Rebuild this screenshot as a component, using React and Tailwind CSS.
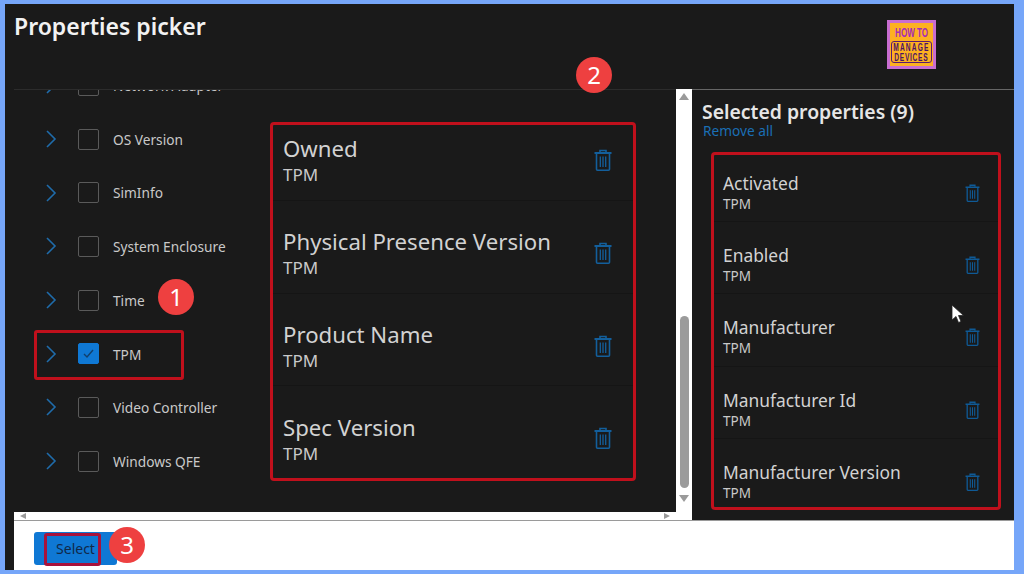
const FONT = "font-['Noto_Sans','Open_Sans',sans-serif]";

function Chevron() {
  return (
    <svg width="12" height="20" viewBox="0 0 12 20" fill="none" className="shrink-0">
      <polyline points="2,2 10,10 2,18" stroke="#1f6cab" strokeWidth="1.6" />
    </svg>
  );
}

function Trash({ className }) {
  return (
    <svg viewBox="0 0 18 22" fill="none" stroke="currentColor" strokeWidth="1.6" className={className}>
      <path d="M6 3.5V1.5h6v2" />
      <path d="M0.5 4h17" strokeWidth="2" />
      <path d="M2.5 4.5v15.7a1 1 0 0 0 1 1h11a1 1 0 0 0 1-1V4.5" />
      <path d="M6.3 7.5v10.5M9 7.5v10.5M11.7 7.5v10.5" strokeWidth="1.3" />
    </svg>
  );
}

function Badge({ n, className }) {
  return (
    <div className={`absolute flex h-[36px] w-[36px] items-center justify-center rounded-full bg-[#ee4040] text-[24px] leading-none text-white ${className}`}>
      {n}
    </div>
  );
}

function TreeRow({ label, checked, boxed }) {
  return (
    <div className="relative flex h-[53.7px] items-center pl-[31px]">
      <Chevron />
      <div
        className={`ml-[21px] flex h-[21px] w-[21px] shrink-0 items-center justify-center rounded-[2px] border ${
          checked ? "border-[#0f78d4] bg-[#0f78d4]" : "border-[#5a5a5a]"
        }`}
      >
        {checked && (
          <svg width="13" height="11" viewBox="0 0 13 11" fill="none">
            <polyline points="2,6 5,9 11,2" stroke="#123f6b" strokeWidth="1.4" />
          </svg>
        )}
      </div>
      <span className="ml-[14px] whitespace-nowrap pt-[2px] text-[13.7px] text-[#c9c9c9]">{label}</span>
      {boxed && (
        <div className="absolute left-[20px] top-[3px] h-[50px] w-[150px] rounded-[3px] border-[3px] border-[#c0101c]" />
      )}
    </div>
  );
}

const leftItems = ["Owned", "Physical Presence Version", "Product Name", "Spec Version"];
const rightItems = ["Activated", "Enabled", "Manufacturer", "Manufacturer Id", "Manufacturer Version"];

export default function App() {
  return (
    <div className={`relative h-[574px] w-[1024px] overflow-hidden bg-[#76a6f9] pb-[4px] pl-[5px] pr-[10px] pt-[4px] ${FONT}`}>
      <div className="flex h-full flex-col bg-[#1a1a1a] pl-[9px]">
        {/* header */}
        <div className="relative h-[85px] shrink-0">
          <h1 className="mt-[6px] text-[23px] font-semibold leading-[32px] text-[#f2f2f2]">Properties picker</h1>
          <div className="absolute left-[873px] top-[16px] flex h-[49px] w-[49px] flex-col items-center overflow-hidden border-[3px] border-[#c86dd0] bg-[#fdb021] pt-[2px] font-['Liberation_Sans',sans-serif] text-[#a52cb8]">
            <div className="scale-x-[0.62] whitespace-nowrap text-[13px] font-bold leading-[15px]">HOW TO</div>
            <div className="mt-[1px] flex h-[22px] w-[41px] flex-col items-center justify-center overflow-hidden rounded-[3px] border border-[#5a1a70] text-[#4b1466]">
              <div className="scale-x-[0.6] whitespace-nowrap text-[11px] font-bold leading-[10px] tracking-[2px]">MANAGE</div>
              <div className="scale-x-[0.6] whitespace-nowrap text-[11px] font-bold leading-[10px] tracking-[1.2px]">DEVICES</div>
            </div>
          </div>
        </div>

        {/* body */}
        <div className="flex h-[431px] shrink-0">
          <div className="flex w-[678px] shrink-0">
            <div className="flex h-[423px] flex-1 overflow-hidden border-t border-[#2c2c2c] bg-[#1a1a1a]">
              <div className="w-[256px] shrink-0 overflow-hidden">
                <div className="-mt-[31.5px]">
                  <TreeRow label="Network Adapter" />
                  <TreeRow label="OS Version" />
                  <TreeRow label="SimInfo" />
                  <TreeRow label="System Enclosure" />
                  <TreeRow label="Time" />
                  <TreeRow label="TPM" checked boxed />
                  <TreeRow label="Video Controller" />
                  <TreeRow label="Windows QFE" />
                </div>
              </div>
              <div className="mt-[32px] h-[359px] w-[366px] shrink-0 overflow-hidden rounded-[4px] border-[3px] border-[#c0101c]">
                {leftItems.map((t, i) => (
                  <div
                    key={t}
                    className={`flex items-start justify-between pl-[10px] pr-[21px] ${
                      i === 0 ? "h-[76px] pt-[10px]" : i === 3 ? "h-[92.7px] pt-[28px]" : "h-[92.7px] pt-[27px]"
                    } ${i < 3 ? "border-b border-[#151515]" : ""}`}
                  >
                    <div>
                      <div className="text-[22.2px] leading-[28px] text-[#d2d2d2]">{t}</div>
                      <div className="text-[17px] leading-[24px] text-[#c9c9c9]">TPM</div>
                    </div>
                    <Trash className={`${i === 3 ? "mt-[13px]" : "mt-[14px]"} h-[22px] w-[18px] text-[#135f9c]`} />
                  </div>
                ))}
              </div>
            </div>
            {/* vertical scrollbar */}
            <div className="flex h-[431px] w-[16px] shrink-0 flex-col items-center bg-white pt-[4px]">
              <div className="h-0 w-0 border-x-[5px] border-b-[7px] border-x-transparent border-b-[#9a9a9a]" />
              <div className="mt-[216px] h-[172px] w-[9px] rounded-full bg-[#9b9b9b]" />
              <div className="mt-[7px] h-0 w-0 border-x-[5px] border-t-[7px] border-x-transparent border-t-[#9a9a9a]" />
            </div>
          </div>
          {/* selected */}
          <div className="flex-1 border-t border-[#666] pl-[10px] pt-[9px]">
            <div className="whitespace-nowrap text-[19.4px] font-semibold leading-[25px] text-[#e6e6e6]">Selected properties (9)</div>
            <div className="ml-[1px] text-[13.7px] leading-[14px] text-[#1a6fb5]">Remove all</div>
            <div className="ml-[9px] mt-[14px] h-[358px] w-[290px] overflow-hidden rounded-[4px] border-[3px] border-[#c0101c]">
              {rightItems.map((t, i) => (
                <div
                  key={t}
                  className={`flex items-start justify-between pl-[9px] pr-[18px] ${
                    i === 0 ? "h-[67px] pt-[16.5px]" : "h-[72.4px] pt-[22px]"
                  } ${i < 4 ? "border-b border-[#151515]" : ""}`}
                >
                  <div>
                    <div className="whitespace-nowrap text-[17.4px] leading-[23px] text-[#d2d2d2]">{t}</div>
                    <div className="text-[13.5px] leading-[19px] text-[#c9c9c9]">TPM</div>
                  </div>
                  <Trash className="mt-[12px] h-[18px] w-[15px] text-[#0f5a96]" />
                </div>
              ))}
            </div>
          </div>
        </div>

        {/* footer */}
        <div className="relative flex-1 border-t border-[#9a9a9a] bg-white">
          <div className="absolute left-[20px] top-[11px] flex h-[33px] w-[83px] items-center justify-center rounded-[3px] bg-[#0f78d4] text-[14px] text-[#10294a]">
            Select
          </div>
        </div>
      </div>

      {/* horizontal scrollbar strip */}
      <div className="absolute left-[14px] top-[512px] flex h-[8px] w-[662px] items-center justify-between bg-white px-[6px]">
        <div className="h-0 w-0 border-y-[3px] border-r-[6px] border-y-transparent border-r-[#9a9a9a]" />
        <div className="h-0 w-0 border-y-[3px] border-l-[6px] border-y-transparent border-l-[#9a9a9a]" />
      </div>

      {/* annotations */}
      <div className="absolute left-[44px] top-[533px] h-[33px] w-[57px] rounded-[3px] border-[3px] border-[#a8123c]" />
      <Badge n="1" className="left-[158px] top-[279px]" />
      <Badge n="2" className="left-[576px] top-[57px]" />
      <Badge n="3" className="left-[109px] top-[527px]" />
      <svg width="14" height="20" viewBox="0 0 14 20" className="absolute left-[951px] top-[304px]">
        <path d="M1 1v15l4-3.5 2.5 6 2.5-1-2.5-6h5z" fill="#fff" stroke="#222" strokeWidth="0.8" />
      </svg>
    </div>
  );
}
